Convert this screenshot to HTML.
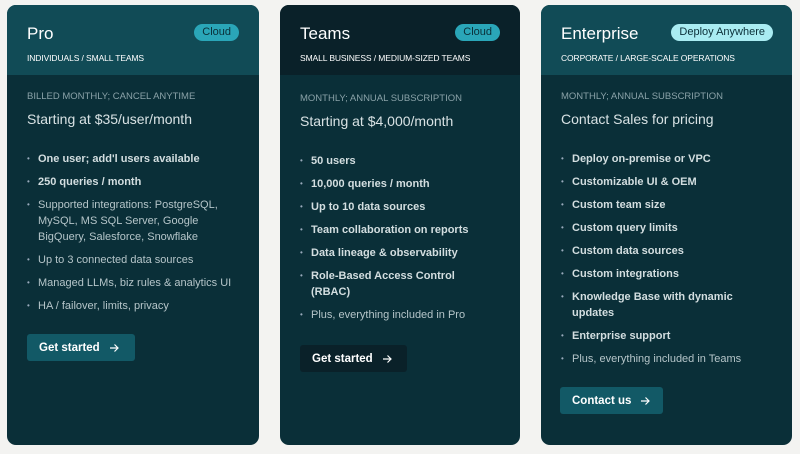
<!DOCTYPE html>
<html><head><style>
*{margin:0;padding:0;box-sizing:border-box}
body{width:800px;height:454px;background:#f3f3f1;font-family:"Liberation Sans",sans-serif;position:relative;overflow:hidden}
.card{position:absolute;top:5px;height:440px;border-radius:9px;background:#0a2f38;overflow:hidden;color:#c9d6d9}
.hd{height:70px;padding:0 20px;position:relative}
.hd h2{position:absolute;left:20px;top:19px;font-weight:normal;font-size:17px;color:#fff}
.hd .sub{position:absolute;left:20px;top:48px;font-size:8.5px;color:#fff;letter-spacing:-0.1px}
.badge{position:absolute;top:19px;height:17px;border-radius:9px;background:#2aa6b8;color:#0a2f38;font-size:11px;line-height:17px;padding:0 8px;display:flex;align-items:center}
.bl{position:absolute;left:20px;top:86px;font-size:9.5px;color:#8aa2a8}
.pr{position:absolute;left:20px;top:106px;font-size:14px;color:#d8e2e4}
ul{position:absolute;left:20px;top:146px;list-style:none;width:210px}
li{font-size:11px;line-height:16px;margin-bottom:7px;padding-left:11px;position:relative;color:#b5c5c9}
li b{color:#d3dee0}
li:before{content:"•";position:absolute;left:0;top:0;font-size:8px;color:#9ab}
.btn{position:absolute;left:20px;height:27px;border-radius:3px;color:#fff;font-weight:bold;font-size:11.5px;padding:0 12px;white-space:nowrap;display:flex;align-items:center}
.btn svg{margin-left:9px}
</style></head><body>
<div class="card" style="left:7px;width:252px">
 <div class="hd" style="background:#114b56"><h2>Pro</h2><span class="badge" style="right:20px">Cloud</span><div class="sub">INDIVIDUALS / SMALL TEAMS</div></div>
 <div class="bl">BILLED MONTHLY; CANCEL ANYTIME</div>
 <div class="pr">Starting at $35/user/month</div>
 <ul><li><b>One user; add'l users available</b></li><li><b>250 queries / month</b></li><li>Supported integrations: PostgreSQL, MySQL, MS SQL Server, Google BigQuery, Salesforce, Snowflake</li><li>Up to 3 connected data sources</li><li>Managed LLMs, biz rules &amp; analytics UI</li><li>HA / failover, limits, privacy</li></ul>
 <div class="btn" style="top:329px;background:#125966;width:108px">Get started <svg width="10" height="10" viewBox="0 0 10 10"><path d="M1 5H9M5.5 1.5L9 5L5.5 8.5" fill="none" stroke="#fff" stroke-width="1.2"/></svg></div>
</div>
<div class="card" style="left:280px;width:240px">
 <div class="hd" style="background:#0a2129"><h2>Teams</h2><span class="badge" style="right:20px">Cloud</span><div class="sub">SMALL BUSINESS / MEDIUM-SIZED TEAMS</div></div>
 <div class="bl" style="top:88px">MONTHLY; ANNUAL SUBSCRIPTION</div>
 <div class="pr" style="top:108px">Starting at $4,000/month</div>
 <ul style="top:148px;width:190px"><li><b>50 users</b></li><li><b>10,000 queries / month</b></li><li><b>Up to 10 data sources</b></li><li><b>Team collaboration on reports</b></li><li><b>Data lineage &amp; observability</b></li><li><b>Role-Based Access Control (RBAC)</b></li><li>Plus, everything included in Pro</li></ul>
 <div class="btn" style="top:340px;background:#0a2129;width:107px">Get started <svg width="10" height="10" viewBox="0 0 10 10"><path d="M1 5H9M5.5 1.5L9 5L5.5 8.5" fill="none" stroke="#fff" stroke-width="1.2"/></svg></div>
</div>
<div class="card" style="left:541px;width:251px">
 <div class="hd" style="background:#114b56"><h2>Enterprise</h2><span class="badge" style="right:19px;background:#a9ecf2">Deploy Anywhere</span><div class="sub">CORPORATE / LARGE-SCALE OPERATIONS</div></div>
 <div class="bl">MONTHLY; ANNUAL SUBSCRIPTION</div>
 <div class="pr">Contact Sales for pricing</div>
 <ul style="width:200px"><li><b>Deploy on-premise or VPC</b></li><li><b>Customizable UI &amp; OEM</b></li><li><b>Custom team size</b></li><li><b>Custom query limits</b></li><li><b>Custom data sources</b></li><li><b>Custom integrations</b></li><li><b>Knowledge Base with dynamic updates</b></li><li><b>Enterprise support</b></li><li>Plus, everything included in Teams</li></ul>
 <div class="btn" style="top:382px;left:19px;background:#125966;width:103px">Contact us <svg width="10" height="10" viewBox="0 0 10 10"><path d="M1 5H9M5.5 1.5L9 5L5.5 8.5" fill="none" stroke="#fff" stroke-width="1.2"/></svg></div>
</div>
</body></html>
